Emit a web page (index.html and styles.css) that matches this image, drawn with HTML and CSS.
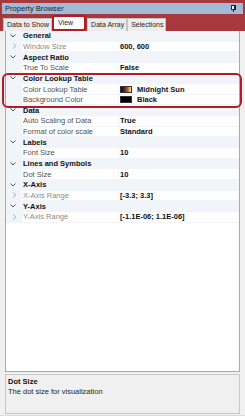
FILE: index.html
```html
<!DOCTYPE html>
<html>
<head>
	<title>Property Browser</title>
	<link rel="stylesheet" href="styles.css">
</head>
<body>
	<div class="window">
		<div class="header">
			<div class="title">
				<span>Property Browser</span>
				<svg class="pin" width="5" height="7" viewBox="0 0 5 7">
					<rect x="0.5" y="0.5" width="4" height="4" fill="#fff" stroke="#222"/>
					<rect x="3" y="1" width="1" height="3" fill="#222"/>
					<rect x="0" y="4" width="5" height="1" fill="#222"/>
					<rect x="2" y="5" width="1" height="2" fill="#222"/>
				</svg>
			</div>
			<div class="tabs">
				<div class="tab">Data to Show</div>
				<div class="tab active">View</div>
				<div class="tab">Data Array</div>
				<div class="tab">Selections</div>
			</div>
		</div>

		<div class="content">
			<div class="grid">
				<div class="row cat"><span class="gl"><svg width="6" height="4" viewBox="0 0 6 4"><polyline points="0.5,0.5 3,3 5.5,0.5" fill="none" stroke="#555"/></svg></span><span class="name">General</span></div>
				<div class="row ro"><span class="gl"><svg width="3" height="6" viewBox="0 0 3 6"><polyline points="0.5,0.5 2.5,3 0.5,5.5" fill="none" stroke="#aaa"/></svg></span><span class="name">Window Size</span><span class="val">600, 600</span></div>
				<div class="row cat"><span class="gl"><svg width="6" height="4" viewBox="0 0 6 4"><polyline points="0.5,0.5 3,3 5.5,0.5" fill="none" stroke="#555"/></svg></span><span class="name">Aspect Ratio</span></div>
				<div class="row"><span class="gl"></span><span class="name">True To Scale</span><span class="val">False</span></div>

				<div class="mark">
					<div class="row cat"><span class="gl"><svg width="6" height="4" viewBox="0 0 6 4"><polyline points="0.5,0.5 3,3 5.5,0.5" fill="none" stroke="#555"/></svg></span><span class="name">Color Lookup Table</span></div>
					<div class="row"><span class="gl"></span><span class="name">Color Lookup Table</span><span class="val"><i class="swatch sun"></i>Midnight Sun</span></div>
					<div class="row"><span class="gl"></span><span class="name">Background Color</span><span class="val"><i class="swatch black"></i>Black</span></div>
				</div>

				<div class="row cat"><span class="gl"><svg width="6" height="4" viewBox="0 0 6 4"><polyline points="0.5,0.5 3,3 5.5,0.5" fill="none" stroke="#555"/></svg></span><span class="name">Data</span></div>
				<div class="row"><span class="gl"></span><span class="name">Auto Scaling of Data</span><span class="val">True</span></div>
				<div class="row"><span class="gl"></span><span class="name">Format of color scale</span><span class="val">Standard</span></div>
				<div class="row cat"><span class="gl"><svg width="6" height="4" viewBox="0 0 6 4"><polyline points="0.5,0.5 3,3 5.5,0.5" fill="none" stroke="#555"/></svg></span><span class="name">Labels</span></div>
				<div class="row"><span class="gl"></span><span class="name">Font Size</span><span class="val">10</span></div>
				<div class="row cat"><span class="gl"><svg width="6" height="4" viewBox="0 0 6 4"><polyline points="0.5,0.5 3,3 5.5,0.5" fill="none" stroke="#555"/></svg></span><span class="name">Lines and Symbols</span></div>
				<div class="row"><span class="gl"></span><span class="name">Dot Size</span><span class="val">10</span></div>
				<div class="row cat"><span class="gl"><svg width="6" height="4" viewBox="0 0 6 4"><polyline points="0.5,0.5 3,3 5.5,0.5" fill="none" stroke="#555"/></svg></span><span class="name">X-Axis</span></div>
				<div class="row ro"><span class="gl"><svg width="3" height="6" viewBox="0 0 3 6"><polyline points="0.5,0.5 2.5,3 0.5,5.5" fill="none" stroke="#aaa"/></svg></span><span class="name">X-Axis Range</span><span class="val">[-3.3; 3.3]</span></div>
				<div class="row cat"><span class="gl"><svg width="6" height="4" viewBox="0 0 6 4"><polyline points="0.5,0.5 3,3 5.5,0.5" fill="none" stroke="#555"/></svg></span><span class="name">Y-Axis</span></div>
				<div class="row ro"><span class="gl"><svg width="3" height="6" viewBox="0 0 3 6"><polyline points="0.5,0.5 2.5,3 0.5,5.5" fill="none" stroke="#aaa"/></svg></span><span class="name">Y-Axis Range</span><span class="val">[-1.1E-06; 1.1E-06]</span></div>
			</div>

			<div class="desc">
				<b>Dot Size</b>
				<span>The dot size for visualization</span>
			</div>
		</div>
	</div>
</body>
</html>
```

FILE: styles.css
```css
html, body {
	margin: 0;
	padding: 0;
	background: #fff;
	font-family: "Liberation Sans", Arial, sans-serif;
	font-size: 7.5px;
	color: #1e1e1e;
}

.window {
	width: 245px;
	height: 416px;
	background: #f0f0f0;
	border-bottom: 1px solid #dcdcdc;
	box-sizing: border-box;
	display: flex;
	flex-direction: column;
}

.header {
	background: #a7393d;
	padding: 3px 2px 0 2px;
}

.title {
	height: 11px;
	background: #a2b9d8;
	display: flex;
	align-items: center;
	justify-content: space-between;
	padding: 0 7px 0 3px;
	font-size: 7.6px;
	color: #1b1b1b;
}

.pin {
	display: block;
}

.tabs {
	height: 17px;
	display: flex;
	align-items: flex-end;
	padding-left: 1px;
	font-size: 7px;
}

.tab {
	height: 12px;
	line-height: 12px;
	padding: 0 2px 0 3px;
	background: #ececec;
	border: 1px solid #c4c4c4;
	border-bottom: none;
	margin-right: 0;
	white-space: nowrap;
}

.tab.active {
	height: 12px;
	line-height: 12px;
	padding: 0 11px 0 4px;
	background: #fff;
	border: 2px solid #b01d2a;
	border-radius: 3px;
	margin: 0 1px 0 0;
}

.content {
	flex: 1;
	display: flex;
	flex-direction: column;
	padding: 0 5px 2px 5px;
}

.grid {
	height: 341px;
	background: #fff;
	border: 1px solid #a9a9a9;
	border-top: none;
	box-sizing: border-box;
}

.row {
	display: grid;
	grid-template-columns: 16px 97px 1fr;
	height: 10.65px;
	align-items: center;
	white-space: nowrap;
	box-sizing: border-box;
	border-bottom: 1px solid #f1f4f9;
}

.row .gl {
	height: 100%;
	background: #f1f4f9;
	display: flex;
	align-items: center;
	justify-content: center;
}

.row .name {
	height: 100%;
	display: flex;
	align-items: center;
	padding-left: 1px;
	color: #505050;
	border-right: 1px solid #f1f4f9;
}

.row.ro .name {
	color: #8a8a8a;
}

.row .val {
	padding-left: 1px;
	font-weight: bold;
	color: #111;
	display: flex;
	align-items: center;
}

.row.cat {
	background: #f1f4f9;
}

.row.cat .name {
	grid-column: span 2;
	font-weight: bold;
	color: #111;
	border-right: none;
}

.row.cat .gl {
	justify-content: flex-start;
	padding-left: 4px;
}

.swatch {
	display: inline-block;
	width: 12px;
	height: 7px;
	border: 1px solid #333;
	margin-right: 5px;
	box-sizing: border-box;
}

.swatch.sun {
	background: linear-gradient(to right, #120820, #4a1d3a 30%, #c2561c 65%, #f5a43a 85%, #fbe0a0);
}

.swatch.black {
	background: #000;
}

.mark {
	position: relative;
}

.mark::after {
	content: '';
	position: absolute;
	top: -1px;
	bottom: -3px;
	left: -4px;
	right: -3px;
	border: 2px solid #b01d2a;
	border-radius: 6px;
}

.desc {
	margin-top: 2px;
	height: 40px;
	background: #f0f0f0;
	border: 1px solid #c8c8c8;
	box-sizing: border-box;
	padding: 2px 2px;
	display: flex;
	flex-direction: column;
	line-height: 10px;
}

.desc b {
	color: #111;
}
```
